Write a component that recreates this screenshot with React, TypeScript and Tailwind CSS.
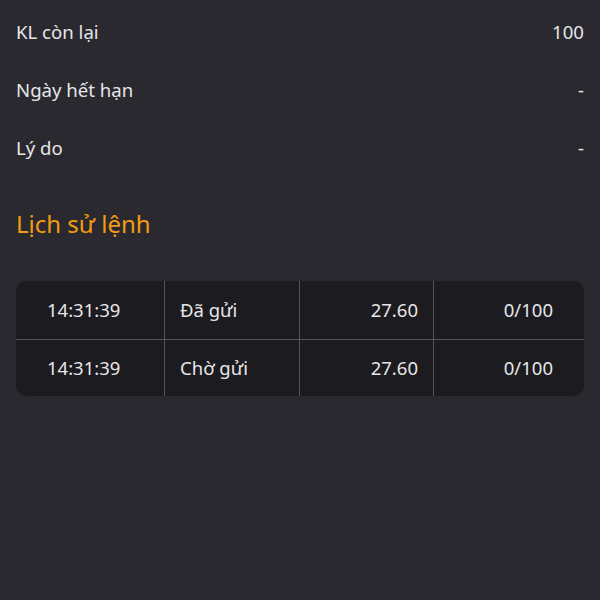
import React from 'react';

const info = [
  { label: 'KL còn lại', value: '100' },
  { label: 'Ngày hết hạn', value: '-' },
  { label: 'Lý do', value: '-' },
];

const history = [
  { time: '14:31:39', status: 'Đã gửi', price: '27.60', qty: '0/100' },
  { time: '14:31:39', status: 'Chờ gửi', price: '27.60', qty: '0/100' },
];

const App: React.FC = () => {
  return (
    <div className="w-[600px] h-[600px] bg-[#2a2930] text-[#e6e6e8] px-4 overflow-hidden" style={{ fontFamily: '"Noto Sans", sans-serif' }}>
      <div className="pt-[3px]">
        {info.map(r => (
          <div key={r.label} className="h-[58px] flex items-center justify-between text-[18.6px]">
            <span>{r.label}</span>
            <span>{r.value}</span>
          </div>
        ))}
      </div>
      <h2 className="mt-[31px] text-[24px] text-[#f39c12] leading-[32px]">Lịch sử lệnh</h2>
      <div className="mt-[41px] bg-[#1c1b20] rounded-[10px] overflow-hidden text-[18.5px]">
        {history.map((h, i) => (
          <div key={i} className={`flex h-[57.5px] ${i > 0 ? 'border-t border-[#55545b]' : ''}`}>
            <div className="w-[149px] flex items-center pl-[31px] border-r border-[#55545b]">{h.time}</div>
            <div className="w-[135px] flex items-center pl-[15px] border-r border-[#55545b]">{h.status}</div>
            <div className="w-[134px] flex items-center justify-end pr-[15px] border-r border-[#55545b]">{h.price}</div>
            <div className="flex-1 flex items-center justify-end pr-[31px]">{h.qty}</div>
          </div>
        ))}
      </div>
    </div>
  );
};

export default App;
